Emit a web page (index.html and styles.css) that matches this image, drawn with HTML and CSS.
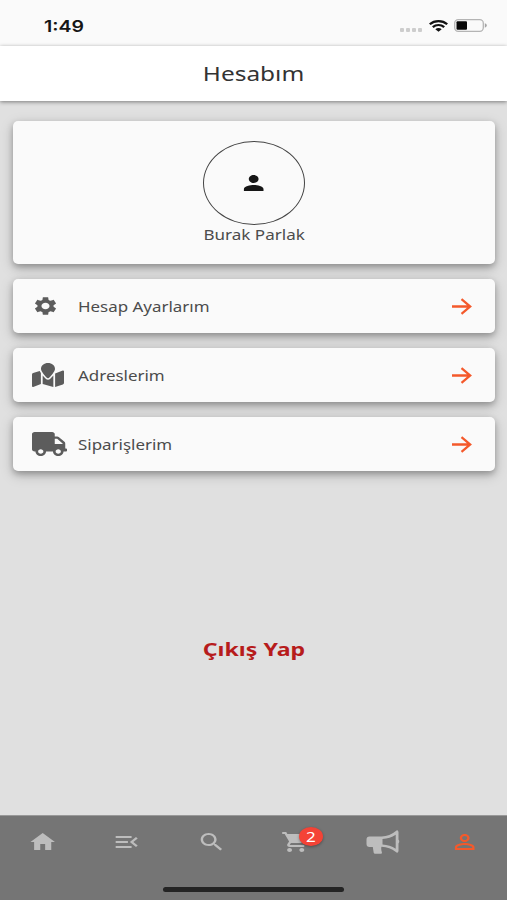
FILE: index.html
```html
<!DOCTYPE html>
<html lang="tr">
<head>
<meta charset="utf-8">
<title>Hesabım</title>
<link rel="stylesheet" href="styles.css">
</head>
<body>
<div class="screen">
  <div class="status">
    <span class="clock wide">1:49</span>
    <div class="indicators">
      <span class="dots"><i></i><i></i><i></i><i></i></span>
      <svg class="wifi" viewBox="0 0 19 13" preserveAspectRatio="none"><g fill="none" stroke="#111" stroke-width="2.300"><path d="M.8 4.700C5.600.1 13.400.1 18.200 4.700"/><path d="M3.800 7.700c3.200-3 8.200-3 11.400 0"/></g><path fill="#111" d="M6.300 9.900c1.800-1.600 4.600-1.600 6.400 0L9.500 12.800z"/></svg>
      <svg class="battery" viewBox="0 0 33 13"><rect x=".7" y=".7" width="28.600" height="11.600" rx="3.500" fill="none" stroke="#b4b4b4" stroke-width="1.300"/><rect x="2.500" y="2.200" width="10.500" height="8.600" rx="1" fill="#080808"/><path fill="#a5a5a5" d="M30.800 4.300q2 .6 2 2.200t-2 2.200z"/></svg>
    </div>
  </div>
  <header class="appbar"><h1 class="wide">Hesabım</h1></header>
  <main>
    <section class="card profile">
      <div class="avatar"><svg class="icon" viewBox="0 0 24 24" preserveAspectRatio="none"><path d="M12 12c2.210 0 4-1.790 4-4s-1.790-4-4-4-4 1.790-4 4 1.790 4 4 4zm0 2c-2.670 0-8 1.340-8 4v2h16v-2c0-2.660-5.330-4-8-4z"/></svg></div>
      <span class="name wide">Burak Parlak</span>
    </section>
    <a class="card row">
      <span class="lead"><svg class="gear" viewBox="0 0 24 24" preserveAspectRatio="none"><path d="M19.140 12.940c.04-.3.06-.61.06-.94 0-.32-.02-.64-.07-.94l2.030-1.580c.18-.14.23-.41.12-.61l-1.920-3.320c-.12-.22-.37-.29-.59-.22l-2.390.96c-.5-.38-1.030-.7-1.620-.94l-.36-2.540c-.04-.24-.24-.41-.48-.41h-3.840c-.24 0-.43.17-.47.41l-.36 2.540c-.59.24-1.130.57-1.620.94l-2.390-.96c-.22-.08-.47 0-.59.22L2.740 8.870c-.12.21-.08.47.12.61l2.030 1.580c-.05.3-.09.63-.09.94s.02.64.07.94l-2.030 1.580c-.18.14-.23.41-.12.61l1.920 3.320c.12.22.37.29.59.22l2.390-.96c.5.38 1.030.7 1.620.94l.36 2.540c.05.24.24.41.48.41h3.840c.24 0 .44-.17.47-.41l.36-2.540c.59-.24 1.130-.56 1.620-.94l2.390.96c.22.08.47 0 .59-.22l1.920-3.320c.12-.22.07-.47-.12-.61l-2.010-1.580zM12 15.600c-1.980 0-3.600-1.620-3.600-3.600s1.620-3.600 3.600-3.600 3.600 1.620 3.600 3.600-1.620 3.600-3.600 3.600z"/></svg></span>
      <span class="label wide-left">Hesap Ayarlarım</span>
      <svg class="arrow" viewBox="0 0 20 16" preserveAspectRatio="none"><path d="M0 8h18M9.500 1l8.700 7-8.700 7"/></svg>
    </a>
    <a class="card row">
      <span class="lead"><svg class="map" viewBox="0 0 576 512" preserveAspectRatio="none"><path d="M288 0c-69.590 0-126 56.410-126 126 0 56.260 82.350 158.800 113.900 196.020 6.390 7.540 17.820 7.540 24.200 0C331.650 284.800 414 182.260 414 126 414 56.410 357.590 0 288 0zM20.120 215.950A32.006 32.006 0 0 0 0 245.660v250.320c0 11.320 11.430 19.060 21.940 14.860L160 448V214.920c-8.840-15.980-16.070-31.540-21.250-46.420L20.120 215.950zM288 359.670c-14.070 0-27.380-6.180-36.510-16.960-19.660-23.200-40.570-49.620-59.490-76.720v182l192 64V266c-18.920 27.090-39.820 53.520-59.490 76.720-9.130 10.770-22.440 16.950-36.510 16.950zm266.060-198.510L416 224v288l139.880-55.950A31.996 31.996 0 0 0 576 426.340V176.020c0-11.320-11.430-19.060-21.940-14.860z"/></svg></span>
      <span class="label wide-left">Adreslerim</span>
      <svg class="arrow" viewBox="0 0 20 16" preserveAspectRatio="none"><path d="M0 8h18M9.500 1l8.700 7-8.700 7"/></svg>
    </a>
    <a class="card row">
      <span class="lead"><svg class="truck" viewBox="0 0 640 512" preserveAspectRatio="none"><path d="M624 352h-16V243.900c0-12.700-5.100-24.900-14.100-33.900L494 110.100c-9-9-21.200-14.100-33.900-14.100H416V48c0-26.500-21.500-48-48-48H48C21.500 0 0 21.500 0 48v320c0 26.500 21.500 48 48 48h16c0 53 43 96 96 96s96-43 96-96h128c0 53 43 96 96 96s96-43 96-96h48c8.800 0 16-7.200 16-16v-32c0-8.800-7.200-16-16-16zM160 464c-26.500 0-48-21.500-48-48s21.500-48 48-48 48 21.500 48 48-21.500 48-48 48zm320 0c-26.500 0-48-21.500-48-48s21.500-48 48-48 48 21.500 48 48-21.500 48-48 48zm80-208H416V144h44.100l99.900 99.900V256z"/></svg></span>
      <span class="label wide-left">Siparişlerim</span>
      <svg class="arrow" viewBox="0 0 20 16" preserveAspectRatio="none"><path d="M0 8h18M9.500 1l8.700 7-8.700 7"/></svg>
    </a>
    <a class="logout"><span class="wide">Çıkış Yap</span></a>
  </main>
  <nav>
    <div class="tabs">
      <a><svg class="icon" viewBox="0 0 24 24" preserveAspectRatio="none"><path d="M10 20v-6h4v6h5v-8h3L12 3 2 12h3v8z"/></svg></a>
      <a><svg class="icon" viewBox="0 0 24 24" preserveAspectRatio="none"><path d="M3 18h13v-2H3v2zm0-5h10v-2H3v2zm0-7v2h13V6H3zm18 9.590L17.420 12 21 8.410 19.590 7l-5 5 5 5L21 15.590z"/></svg></a>
      <a><svg class="icon" viewBox="0 0 24 24" preserveAspectRatio="none"><path d="M15.500 14h-.79l-.28-.27C15.410 12.590 16 11.110 16 9.500 16 5.910 13.090 3 9.500 3S3 5.910 3 9.500 5.910 16 9.500 16c1.610 0 3.090-.59 4.230-1.570l.27.28v.79l5 4.990L20.490 19l-4.990-5zm-6 0C7.010 14 5 11.990 5 9.500S7.010 5 9.500 5 14 7.010 14 9.500 11.990 14 9.500 14z"/></svg></a>
      <a class="cart"><svg class="icon" viewBox="0 0 24 24" preserveAspectRatio="none"><path d="M7 18c-1.100 0-1.990.9-1.990 2S5.900 22 7 22s2-.9 2-2-.9-2-2-2zM1 2v2h2l3.600 7.590-1.350 2.450c-.16.28-.25.61-.25.96 0 1.100.9 2 2 2h12v-2H7.420c-.14 0-.25-.11-.25-.25l.03-.12.9-1.630h7.450c.75 0 1.410-.41 1.750-1.030l3.580-6.490c.08-.14.12-.31.12-.48 0-.55-.45-1-1-1H5.210l-.94-2H1zm16 16c-1.100 0-1.990.9-1.990 2s.89 2 1.990 2 2-.9 2-2-.9-2-2-2z"/></svg><span class="badge"><b class="wide">2</b></span></a>
      <a class="campaign"><svg class="horn" viewBox="0 0 34 25" preserveAspectRatio="none"><path fill-rule="evenodd" d="M3.500 6.500h12Q24 6 29.500 1.200q2.500-2 3 .8v7.500q1.500 2 0 4V21q-.5 2.800-3 .8-5.500-4.500-14-5-.8 2 .5 6 0 1-1 1H9q-1 0-1.300-1L6.800 17H3.500q-3 0-3-3V9.500q0-3 3-3zM16.500 9v5.500Q24 15 29.700 18.700V4.800Q24 8.500 16.500 9z"/></svg></a>
      <a class="active"><svg class="icon" viewBox="0 0 24 24" preserveAspectRatio="none"><path d="M12 5.900c1.160 0 2.100.94 2.100 2.100s-.94 2.100-2.100 2.100S9.900 9.160 9.900 8s.94-2.100 2.100-2.100m0 9c2.970 0 6.100 1.460 6.100 2.100v1.100H5.900V17c0-.64 3.130-2.100 6.100-2.100M12 4C9.790 4 8 5.790 8 8s1.790 4 4 4 4-1.790 4-4-1.790-4-4-4zm0 9c-2.670 0-8 1.340-8 4v3h16v-3c0-2.660-5.330-4-8-4z"/></svg></a>
    </div>
    <div class="handle"></div>
  </nav>
</div>
</body>
</html>
```
FILE: styles.css
```css
* { box-sizing: border-box; }
body { margin: 0; font-family: "Noto Sans", "Open Sans", sans-serif; background: #e0e0e0; color: #444; }
.screen { width: 507px; height: 900px; display: flex; flex-direction: column; overflow: hidden; }
svg { display: block; flex: none; fill: currentColor; }
.wide, .wide-left { display: inline-block; white-space: nowrap; transform: scaleX(1.22); }
.wide-left { transform: scaleX(1.168); transform-origin: left center; }
.icon { width: 29.4px; height: 24px; }

.status { height: 46px; flex: none; background: #fafafa; display: flex; justify-content: space-between; align-items: center; padding: 6px 20px 0 44px; }
.clock { font: 600 16px/20px Inter, sans-serif; color: #161616; transform-origin: left center; }
.indicators { display: flex; align-items: center; gap: 6px; }
.dots { display: flex; gap: 2px; padding: 7px 1px 0 0; }
.dots i { width: 4px; height: 4px; border-radius: 1px; background: #cdcdcd; }
.wifi { width: 19px; height: 12px; margin-top: -1px; }
.battery { width: 33px; height: 13px; margin-top: -1px; }

.appbar { height: 55px; flex: none; background: #fff; display: flex; align-items: center; justify-content: center; position: relative; box-shadow: 0 1px 4px rgba(0,0,0,.45); }
h1 { margin: 0; font-size: 20px; font-weight: 400; line-height: 28px; color: #333; transform: scaleX(1.2); }

main { flex: 1; padding: 20px 12px 0 13px; display: flex; flex-direction: column; gap: 15px; }
.card { flex: none; background: #fafafa; border-radius: 5px; box-shadow: 0 3px 6px rgba(0,0,0,.26), 0 4px 14px rgba(0,0,0,.18); }
.profile { height: 143px; padding-top: 20px; display: flex; flex-direction: column; align-items: center; }
.avatar { width: 102px; height: 84px; border: 1.300px solid #444; border-radius: 50%; display: flex; align-items: center; justify-content: center; color: #161616; }
.name { font-size: 14.500px; line-height: 18px; color: #4c4c4c; transform: scaleX(1.175); }
.row { height: 54px; display: flex; align-items: center; padding: 0 23px 0 19px; color: #5c5c5c; }
.lead { width: 46px; flex: none; }
.label { flex: 1; font-size: 14.500px; line-height: 20px; color: #4c4c4c; }
.gear { width: 27px; height: 22px; }
.map { width: 32px; height: 24px; }
.truck { width: 35px; height: 24px; }
.arrow { width: 20px; height: 17px; fill: none; stroke: #f4592b; stroke-width: 2.200; }
.logout { align-self: center; margin-top: 150px; font-size: 18.500px; font-weight: 700; line-height: 26px; color: #b71c1c; }
.logout .wide { transform: scaleX(1.25); }

nav { height: 85px; flex: none; background: #757575; border-top: 1px solid #999; display: flex; flex-direction: column; align-items: center; justify-content: space-between; padding-bottom: 8px; }
.tabs { width: 100%; height: 52px; display: grid; grid-template-columns: repeat(6, 1fr); place-items: center; color: #bdbdbd; }
.cart { position: relative; }
.badge { position: absolute; left: 18px; top: -3px; width: 24px; height: 19px; border-radius: 50%; background: #f44336; color: #fff; display: flex; align-items: center; justify-content: center; font-size: 14px; line-height: 19px; box-shadow: 0 1px 3px rgba(0,0,0,.35); }
.badge b { font-weight: 400; }
.campaign { padding-left: 5px; }
.horn { width: 34px; height: 25px; }
.active { color: #f4592b; }
.handle { width: 181px; height: 5px; border-radius: 3px; background: #242424; }
```
